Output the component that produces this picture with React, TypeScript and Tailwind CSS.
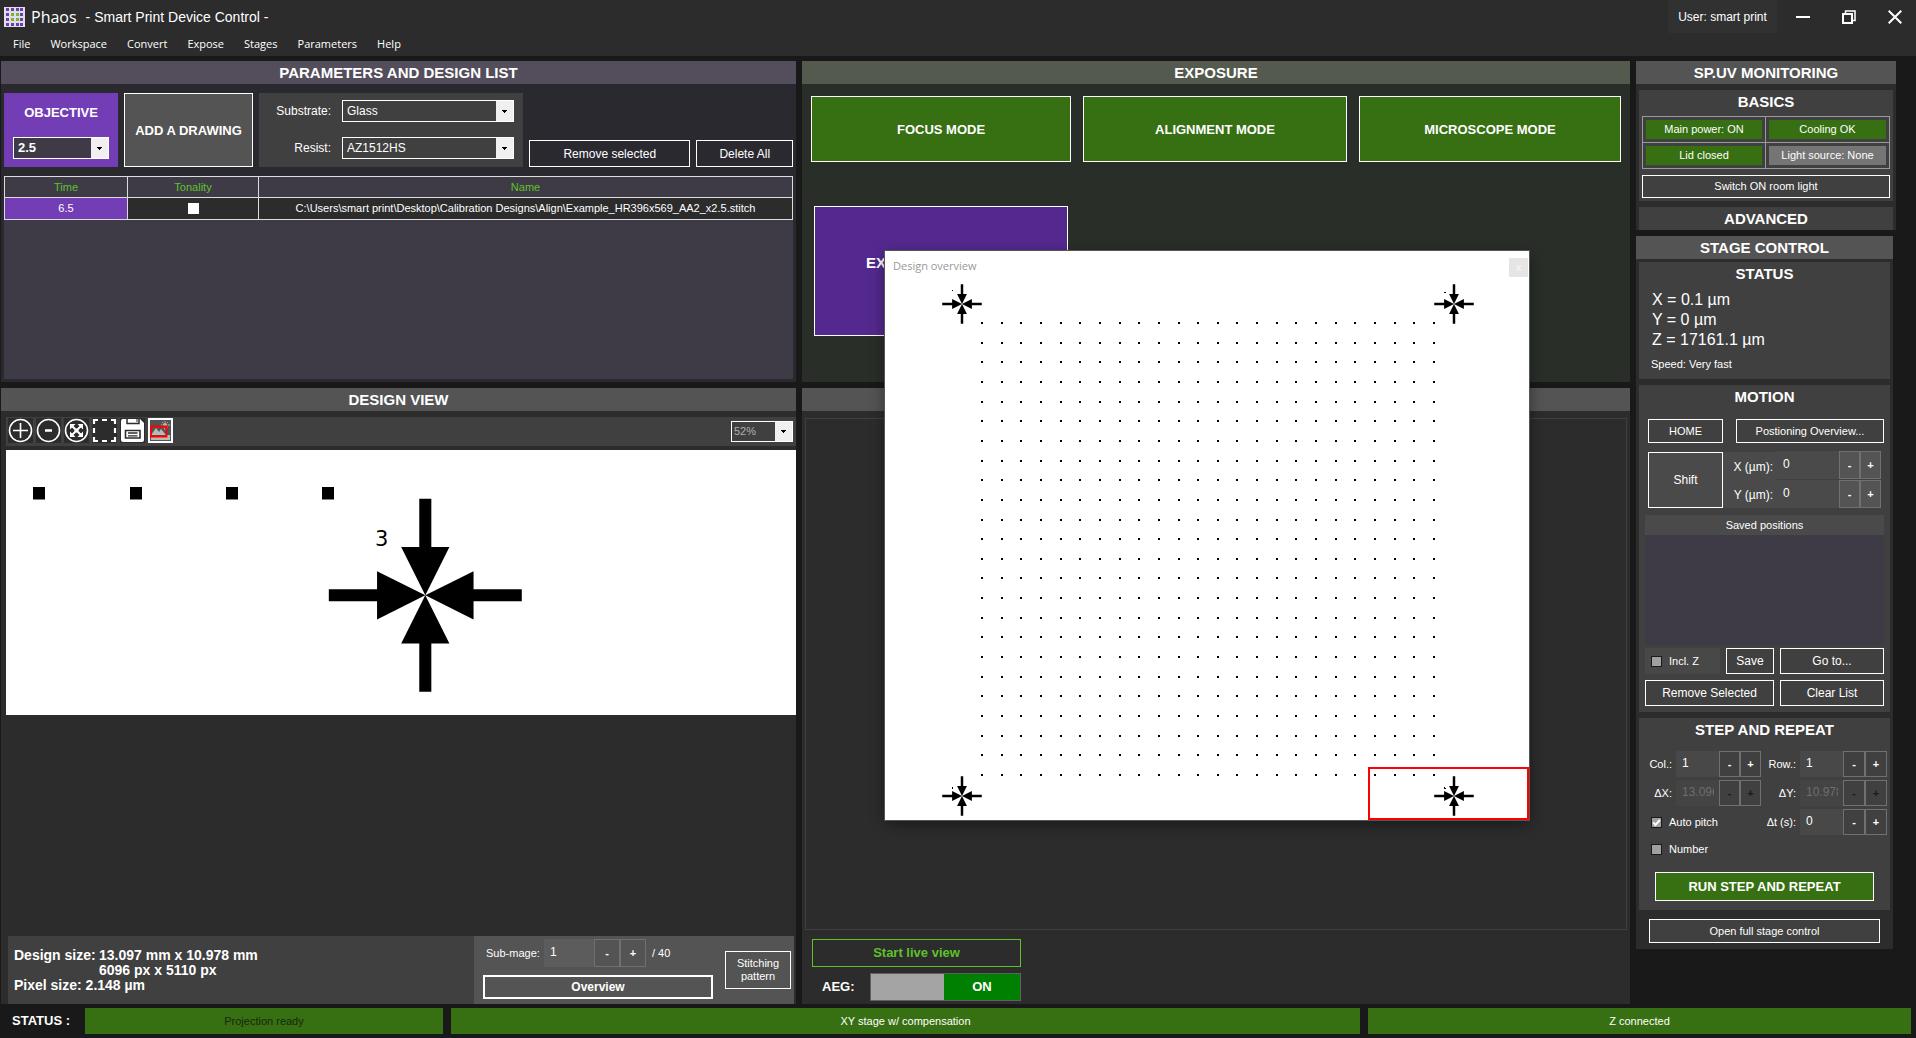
import React from 'react';

const outlineButton = 'border border-white text-white text-center';

function PanelTitle({ children, className = 'bg-[#545454]' }: { children?: React.ReactNode; className?: string }) {
  return (
    <h2 className={`flex h-[23px] shrink-0 items-center justify-center text-[15px] font-bold leading-5 ${className}`}>
      {children}
    </h2>
  );
}

function SubTitle({ children }: { children: React.ReactNode }) {
  return <h3 className="text-center text-[15px] font-bold leading-6">{children}</h3>;
}

function Combo({ id, label, value, className, selectClass }: {
  id: string; label: string; value: string; className: string; selectClass: string;
}) {
  return (
    <div className={`relative border border-white ${className}`}>
      <select
        id={id}
        aria-label={label}
        defaultValue={value}
        className={`block h-full w-full appearance-none pr-[18px] outline-none ${selectClass}`}
      >
        <option>{value}</option>
      </select>
      <span className="pointer-events-none absolute inset-y-0 right-0 flex w-[17px] items-center justify-center bg-[#f0f0f0]">
        <svg width="5" height="3" viewBox="0 0 5 3" shapeRendering="crispEdges">
          <path d="M0 0h5v1H4v1H3v1H2V2H1V1H0z" fill="#000" />
        </svg>
      </span>
    </div>
  );
}

function Stepper({ id, value, disabled, className, buttonClass, bg = 'bg-[#484848]' }: {
  id: string; value: string; disabled?: boolean; className: string; buttonClass: string; bg?: string;
}) {
  const tone = disabled ? 'text-[#1a1a1a]' : 'text-white';
  return (
    <div className={`flex ${className}`}>
      <input
        id={id}
        defaultValue={value}
        disabled={disabled}
        className={`min-w-0 flex-1 pb-[2px] pl-[6px] pr-[5px] text-xs outline-none ${bg} ${disabled ? 'text-[#6e6e6e]' : 'text-white'}`}
      />
      <button disabled={disabled} aria-label="Decrease" className={`border border-[#707070] text-[11px] font-bold leading-none ${tone} ${buttonClass}`}>-</button>
      <button disabled={disabled} aria-label="Increase" className={`border border-[#707070] text-[11px] font-bold leading-none ${tone} ${buttonClass}`}>+</button>
    </div>
  );
}

function Check({ id, label, checked }: { id: string; label: string; checked?: boolean }) {
  return (
    <div className="flex items-center gap-[7px]">
      <span className="relative flex">
        <input id={id} type="checkbox" defaultChecked={checked} className="h-[11px] w-[11px] appearance-none border border-[#1a1a1a] bg-[#a0a0a0]" />
        {checked && (
          <svg className="pointer-events-none absolute inset-0" width="11" height="11" viewBox="0 0 11 11">
            <path d="M2.2 5.4l2.3 2.6 4.3-5" fill="none" stroke="#fff" strokeWidth="2" />
          </svg>
        )}
      </span>
      <label htmlFor={id} className="text-[11px] leading-4">{label}</label>
    </div>
  );
}

function AlignmentMark({ x, y, scale }: { x: number; y: number; scale: number }) {
  return (
    <g transform={`translate(${x} ${y}) scale(${scale})`} fill="#000">
      {[0, 90, 180, 270].map((a) => (
        <path key={a} transform={`rotate(${a})`} d="M0 0L-24 -48H-6V-96H6V-48H24z" />
      ))}
    </g>
  );
}

function Logo() {
  const cells = [0, 1, 2, 3];
  return (
    <svg width="21" height="20" viewBox="0 0 21 20" shapeRendering="crispEdges" className="shrink-0">
      <rect width="21" height="20" rx="1" fill="#e3dcec" />
      {cells.map((r) => cells.map((c) => (
        <rect
          key={`${r}-${c}`}
          x={2 + c * 5 - (c > 2 ? 1 : 0)}
          y={1 + r * 5}
          width="3"
          height="3"
          fill={(r === 1 || r === 2) && (c === 1 || c === 2) ? '#76b82a' : '#6a3fa8'}
        />
      )))}
    </svg>
  );
}

function Header() {
  return (
    <header className="h-14 shrink-0 bg-[#2c2c2c]">
      <div className="flex h-[33px] items-stretch">
        <div className="flex flex-1 items-center pl-1">
          <Logo />
          <h1 className="ml-[6px] font-['Open_Sans',sans-serif] text-base leading-6">Phaos</h1>
          <span className="ml-[9px] text-sm leading-5">- Smart Print Device Control -</span>
        </div>
        <span className="flex w-[109px] items-center justify-center bg-[#313131] text-xs">User: smart print</span>
        <div className="flex w-[139px] items-center justify-end gap-8 pr-[14px]">
          <button aria-label="Minimize">
            <svg width="14" height="14" viewBox="0 0 14 14"><path d="M0 6h14v2H0z" fill="#fff" /></svg>
          </button>
          <button aria-label="Restore">
            <svg width="14" height="14" viewBox="0 0 14 14" fill="none" stroke="#fff">
              <path d="M1 4h9v9H1z" strokeWidth="2" />
              <path d="M3.5 3V1h9.500v9.500h-2" strokeWidth="1.500" />
            </svg>
          </button>
          <button aria-label="Close">
            <svg width="14" height="14" viewBox="0 0 14 14"><path d="M.7.7l12.600 12.600M13.300.7L.7 13.300" stroke="#fff" strokeWidth="2" /></svg>
          </button>
        </div>
      </div>
      <nav className="flex gap-5 pl-[13px] font-['Open_Sans',sans-serif] text-[11px] leading-[22px]">
        {['File', 'Workspace', 'Convert', 'Expose', 'Stages', 'Parameters', 'Help'].map((m) => (
          <button key={m}>{m}</button>
        ))}
      </nav>
    </header>
  );
}

function DesignList() {
  return (
    <section className="bg-[#2b2930]">
      <PanelTitle className="bg-[#544e5c]">PARAMETERS AND DESIGN LIST</PanelTitle>
      <div className="flex px-[3px] pt-[9px]">
        <div className="flex h-[74px] w-[114px] flex-col items-center justify-between bg-[#733eb5] pb-2 pt-3">
          <label htmlFor="objective" className="text-[13px] font-bold leading-4">OBJECTIVE</label>
          <Combo id="objective" label="Objective" value="2.5" className="h-[22px] w-24" selectClass="bg-[#3f3b46] pl-1 text-[13px] font-bold" />
        </div>
        <button className="ml-[6px] h-[74px] w-[129px] border border-white bg-[#545454] pt-px text-[13px] font-bold">ADD A DRAWING</button>
        <div className="ml-[6px] grid h-[74px] w-[264px] grid-cols-[72px_172px] content-between items-center gap-x-[11px] bg-[#404040] pb-2 pt-[7px]">
          <label htmlFor="substrate" className="text-right text-xs">Substrate:</label>
          <Combo id="substrate" label="Substrate" value="Glass" className="h-[22px]" selectClass="bg-[#404040] pl-1 text-xs" />
          <label htmlFor="resist" className="text-right text-xs">Resist:</label>
          <Combo id="resist" label="Resist" value="AZ1512HS" className="h-[22px]" selectClass="bg-[#404040] pl-1 text-xs" />
        </div>
        <div className="ml-[6px] flex flex-1 items-end gap-[6px]">
          <button className={`h-[27px] flex-[162] pt-px text-xs ${outlineButton}`}>Remove selected</button>
          <button className={`h-[27px] flex-[96] pt-px text-xs ${outlineButton}`}>Delete All</button>
        </div>
      </div>
      <div className="mx-[3px] mb-[3px] mt-[9px] h-[203px] bg-[#3f3b46]">
        <table className="w-full table-fixed border-collapse text-center text-[11px] leading-[21px]">
          <colgroup>
            <col className="w-[123px]" />
            <col className="w-[131px]" />
            <col />
          </colgroup>
          <thead>
            <tr className="h-[21px] text-[#5ec22a]">
              {['Time', 'Tonality', 'Name'].map((h) => (
                <th key={h} className="border border-[#dcdcdc] p-0 font-normal leading-5">{h}</th>
              ))}
            </tr>
          </thead>
          <tbody>
            <tr className="h-[22px]">
              <td className="border border-[#dcdcdc] bg-[#733eb5] p-0">6.5</td>
              <td className="border border-[#dcdcdc] bg-[#2c2c2c] p-0">
                <input type="checkbox" aria-label="Tonality" className="mx-auto block h-[11px] w-[11px] appearance-none bg-white" />
              </td>
              <td className="border border-[#dcdcdc] bg-[#2c2c2c] p-0">
                {'C:\\Users\\smart print\\Desktop\\Calibration Designs\\Align\\Example_HR396x569_AA2_x2.5.stitch'}
              </td>
            </tr>
          </tbody>
        </table>
      </div>
    </section>
  );
}

function ToolIcon({ label, active, children }: { label: string; active?: boolean; children: React.ReactNode }) {
  return (
    <button aria-label={label} className={`h-[25px] w-[25px] ${active ? 'bg-[#545454]' : 'bg-[#2c2c2c]'}`}>
      <svg width="25" height="25" viewBox="0 0 25 25" fill="none" stroke="#fff">{children}</svg>
    </button>
  );
}

function Toolbar() {
  return (
    <div className="ml-[5px] mt-[6px] flex h-[29px] items-center justify-between bg-[#404040] pl-[2px] pr-[3px]">
      <div className="flex gap-[3px] pb-[2px]">
        <ToolIcon label="Zoom in">
          <circle cx="12.5" cy="12.5" r="11" strokeWidth="1.600" />
          <path d="M12.500 5v15M5 12.500h15" strokeWidth="1.600" />
        </ToolIcon>
        <ToolIcon label="Zoom out">
          <circle cx="12.5" cy="12.5" r="11" strokeWidth="1.600" />
          <path d="M9 12.500h7" strokeWidth="2.500" />
        </ToolIcon>
        <ToolIcon label="Fit to view">
          <circle cx="12.5" cy="12.5" r="11" strokeWidth="1.600" />
          <path d="M7.500 7.500l10 10M17.500 7.500l-10 10" strokeWidth="2" />
          <path d="M6 6h5.500L6 11.500zM19 6h-5.500L19 11.500zM6 19h5.500L6 13.500zM19 19h-5.500L19 13.500z" fill="#fff" stroke="none" />
          <path d="M10.500 12.500h4M12.500 10.500v4" strokeWidth="1" />
        </ToolIcon>
        <ToolIcon label="Select area">
          <path
            d="M2 6V2h4M10 2h5M19 2h4v4M23 10v5M23 19v4h-4M15 23h-5M6 23H2v-4M2 15v-5"
            strokeWidth="2.200"
          />
        </ToolIcon>
        <ToolIcon label="Save">
          <path d="M3 1h17l4 4v17a2 2 0 0 1-2 2H3a2 2 0 0 1-2-2V3a2 2 0 0 1 2-2z" fill="#fff" stroke="none" />
          <path d="M7 1v4.500h12V1" stroke="#2c2c2c" strokeWidth="1.500" />
          <path d="M17 1v3" stroke="#2c2c2c" strokeWidth="1" />
          <path d="M5.500 12.500h14.500v7.500H5.500z" fill="#fff" stroke="#2c2c2c" strokeWidth="1.600" />
          <path d="M8 15h9.500M8 17.800h9.500" stroke="#2c2c2c" strokeWidth="1.300" />
        </ToolIcon>
        <ToolIcon label="Show overview" active>
          <path d="M1 1h23v23H1z" strokeWidth="2" />
          <path d="M3 17l5-7 3 4 2-3 5 6z" fill="#b8b8b8" stroke="none" />
          <path d="M3 19h19v3H3z" fill="#b8b8b8" stroke="none" />
          <path d="M19 17h3v3h-3z" fill="#b8b8b8" stroke="none" />
          <circle cx="17" cy="7" r="2" fill="#b8b8b8" stroke="none" />
          <path d="M17 3v1.500M13 7h1.500M19.500 7H22M14.200 4.200l1 1M19.800 4.200l-1 1M19.800 9.800l-1-1M16 10l1.500 2" stroke="#b8b8b8" />
          <path d="M3 8.500h15.500v10H3z" stroke="#f00" strokeWidth="1.800" />
        </ToolIcon>
      </div>
      <Combo id="zoom" label="Zoom" value="52%" className="h-[21px] w-[62px]" selectClass="bg-[#404040] pl-[2px] text-[11px] text-[#b0b0b0]" />
    </div>
  );
}

function DesignView() {
  return (
    <section className="flex flex-1 flex-col bg-[#2c2c2c]">
      <PanelTitle>DESIGN VIEW</PanelTitle>
      <Toolbar />
      <div className="ml-[5px] mt-1 overflow-hidden bg-white">
        <svg width="790" height="265" viewBox="0 0 790 265" className="block">
          {[27, 124, 220, 316].map((x) => (
            <rect key={x} x={x} y="37" width="12" height="12.5" fill="#000" />
          ))}
          <text x="369" y="96" fontFamily="DejaVu Sans, sans-serif" fontSize="21" fill="#000">3</text>
          <AlignmentMark x={419.3} y={145.3} scale={1.005} />
        </svg>
      </div>
      <div className="ml-[7px] mr-[2px] mt-auto flex h-[68px]">
        <div className="flex-1 bg-[#404040] pl-[6px] pt-3 text-sm font-bold leading-[15px]">
          <div className="grid grid-cols-[85px_1fr]">
            <span>Design size:</span>
            <span>13.097 mm x 10.978 mm</span>
            <span className="col-start-2">6096 px x 5110 px</span>
          </div>
          <div>Pixel size: 2.148 µm</div>
        </div>
        <div className="flex w-[320px] items-center justify-between bg-[#545454] pl-[9px] pr-[3px]">
          <div className="flex h-full w-[230px] flex-col justify-between pb-[5px] pt-[3px]">
            <div className="flex items-center text-[11px]">
              <label htmlFor="subimage" className="w-[61px] pl-[3px]">Sub-mage:</label>
              <Stepper id="subimage" value="1" className="h-7 w-[102px]" buttonClass="w-[26px] bg-[#545454]" bg="bg-[#5c5c5c]" />
              <span className="ml-[6px]">/ 40</span>
            </div>
            <button className="h-6 border-2 border-white text-xs font-bold leading-none">Overview</button>
          </div>
          <button className={`h-[38px] w-[66px] text-[11px] leading-[13px] ${outlineButton}`}>Stitching<br />pattern</button>
        </div>
      </div>
    </section>
  );
}

function Exposure() {
  return (
    <section className="h-[321px] bg-[#2a2e29]">
      <PanelTitle className="bg-[#545a4e]">EXPOSURE</PanelTitle>
      <div className="grid grid-cols-[260fr_264fr_262fr] gap-3 px-[9px] pt-3">
        {['FOCUS MODE', 'ALIGNMENT MODE', 'MICROSCOPE MODE'].map((m) => (
          <button key={m} className="h-[66px] border border-white bg-[#367012] pt-px text-[13px] font-bold">{m}</button>
        ))}
      </div>
      <button className="ml-3 mt-11 h-[130px] w-[254px] border border-white bg-[#54298f] pb-4 pl-[51px] text-left text-[15px] font-bold">
        EX
      </button>
    </section>
  );
}

function LiveView() {
  return (
    <section className="flex flex-1 flex-col bg-[#2c2c2c]">
      <PanelTitle />
      <div className="mx-[3px] mt-[7px] flex-1 border border-[#404040]" />
      <div className="pb-[3px] pl-[10px] pt-[9px]">
        <button className="h-7 w-[209px] border border-[#5ec22a] text-[13px] font-bold text-[#5ec22a]">Start live view</button>
        <div className="mt-[6px] flex items-center">
          <label htmlFor="aeg" className="w-[58px] pl-[10px] text-[13px] font-bold">AEG:</label>
          <button id="aeg" role="switch" aria-checked="true" className="flex h-7 w-[151px] border border-[#606060] bg-[#a4a4a4]">
            <span className="ml-auto flex h-full w-[76px] items-center justify-center bg-[#008000] text-[13px] font-bold">ON</span>
          </button>
        </div>
      </div>
    </section>
  );
}

function OverviewWindow() {
  const steps = Array.from({ length: 24 }, (_, i) => Math.round(i * 19.65));
  return (
    <div
      role="dialog"
      aria-label="Design overview"
      className="absolute left-[83px] top-[190px] h-[569px] w-[644px] bg-white shadow-[0_0_0_1px_#555,0_4px_14px_rgba(0,0,0,0.45)]"
    >
      <div className="absolute inset-x-0 top-0 flex justify-between pl-2 pr-[1px] pt-[7px]">
        <span className="font-['Open_Sans',sans-serif] text-[11px] leading-4 text-[#999999]">Design overview</span>
        <button aria-label="Close overview" className="h-[19px] w-[19px] bg-[#e5e5e5] text-[11px] leading-none text-[#f6f6f6]">x</button>
      </div>
      <svg width="644" height="569" viewBox="0 0 644 569" className="block">
        <g shapeRendering="crispEdges">
          {steps.map((y) => steps.map((x) => (
            <rect key={`${x}-${y}`} x={96 + x} y={71 + y} width="2" height="2" fill="#000" />
          )))}
          <path d="M67 39h1v1h-1zM559 41h2v1h-2zM67 536h1v2h-1zM559 536h1v1h1v1h-2v-1z" fill="#000" />
        </g>
        <AlignmentMark x={77} y={53} scale={0.206} />
        <AlignmentMark x={569} y={53} scale={0.206} />
        <AlignmentMark x={77} y={545} scale={0.206} />
        <AlignmentMark x={569} y={545} scale={0.206} />
        <rect x="484" y="517" width="159" height="51" fill="none" stroke="#f00" strokeWidth="2" />
      </svg>
    </div>
  );
}

function Monitoring() {
  const cells = ['Main power: ON', 'Cooling OK', 'Lid closed', 'Light source: None'];
  return (
    <section className="bg-[#2c2c2c]">
      <PanelTitle>SP.UV MONITORING</PanelTitle>
      <div className="mx-[3px] mt-[6px] bg-[#404040] px-[3px] pb-[3px]">
        <SubTitle>BASICS</SubTitle>
        <div className="mt-[2px] grid grid-cols-[122fr_123fr] gap-px border border-[#9a9a9a] bg-[#9a9a9a] text-[11px]">
          {cells.map((c, i) => (
            <div key={c} className="bg-[#404040] p-[3px]">
              <div className={`text-center leading-[19px] ${i === 3 ? 'bg-[#757575]' : 'bg-[#367012]'}`}>{c}</div>
            </div>
          ))}
        </div>
        <button className={`mt-[6px] h-[23px] w-full text-[11px] ${outlineButton}`}>Switch ON room light</button>
      </div>
      <div className="mx-[3px] mt-[6px] h-[23px] bg-[#404040]">
        <SubTitle>ADVANCED</SubTitle>
      </div>
    </section>
  );
}

function Motion() {
  return (
    <div className="mt-[6px] bg-[#404040] px-[6px] pb-[6px]">
      <SubTitle>MOTION</SubTitle>
      <div className="mt-[10px] flex justify-between pl-[3px]">
        <button className={`h-6 w-[75px] text-[11px] ${outlineButton}`}>HOME</button>
        <button className={`h-6 w-[148px] text-[11px] ${outlineButton}`}>Postioning Overview...</button>
      </div>
      <div className="mt-2 flex items-end pl-[3px] pr-[3px]">
        <button className={`h-14 w-[75px] bg-[#4a4a4a] text-xs ${outlineButton}`}>Shift</button>
        <div className="grid h-14 flex-1 grid-rows-2 bg-[#4a4a4a] pr-1 text-right text-xs leading-[30px]">
          <label htmlFor="shift-x">X (µm):</label>
          <label htmlFor="shift-y">Y (µm):</label>
        </div>
        <div className="flex w-[104px] flex-col gap-px">
          <Stepper id="shift-x" value="0" className="h-7" buttonClass="w-[21px] bg-[#545454]" bg="bg-[#4a4a4a]" />
          <Stepper id="shift-y" value="0" className="h-7" buttonClass="w-[21px] bg-[#545454]" bg="bg-[#4a4a4a]" />
        </div>
      </div>
      <div className="mt-[7px] bg-[#4a4a4a] pt-px text-center text-[11px] leading-[19px]">Saved positions</div>
      <div className="h-[110px] bg-[#3f3b46]" />
      <div className="mt-[3px] flex gap-[6px]">
        <div className="flex w-[75px] items-center bg-[#484848] pl-[6px]">
          <Check id="incl-z" label="Incl. Z" />
        </div>
        <button className={`h-[26px] w-12 text-xs ${outlineButton}`}>Save</button>
        <button className={`h-[26px] flex-1 text-xs ${outlineButton}`}>Go to...</button>
      </div>
      <div className="mt-[6px] flex gap-[6px]">
        <button className={`h-[26px] w-[129px] text-xs ${outlineButton}`}>Remove Selected</button>
        <button className={`h-[26px] flex-1 text-xs ${outlineButton}`}>Clear List</button>
      </div>
    </div>
  );
}

function StepAndRepeat() {
  return (
    <div className="mt-[6px] bg-[#404040] pb-[9px]">
      <SubTitle>STEP AND REPEAT</SubTitle>
      <div className="mt-[9px] grid grid-cols-[33px_85px_31px_87px] items-center gap-x-1 gap-y-[3px] text-right text-[11px]">
        <label htmlFor="col">Col.:</label>
        <Stepper id="col" value="1" className="h-[26px]" buttonClass="w-[21px] bg-[#404040]" />
        <label htmlFor="row">Row.:</label>
        <Stepper id="row" value="1" className="h-[26px]" buttonClass="w-[22px] bg-[#404040]" />
        <label htmlFor="dx">ΔX:</label>
        <Stepper id="dx" value="13.096" disabled className="h-[26px]" buttonClass="w-[21px] bg-[#404040]" bg="bg-[#444444]" />
        <label htmlFor="dy">ΔY:</label>
        <Stepper id="dy" value="10.978" disabled className="h-[26px]" buttonClass="w-[22px] bg-[#404040]" bg="bg-[#444444]" />
        <div className="col-span-2 pl-3">
          <Check id="auto-pitch" label="Auto pitch" checked />
        </div>
        <label htmlFor="dt">Δt (s):</label>
        <Stepper id="dt" value="0" className="h-[26px]" buttonClass="w-[22px] bg-[#404040]" />
      </div>
      <div className="mt-[6px] pl-3">
        <Check id="number" label="Number" />
      </div>
      <button className="mx-4 mt-[15px] h-[29px] w-[219px] border border-white bg-[#367012] text-[13px] font-bold">RUN STEP AND REPEAT</button>
    </div>
  );
}

function StageControl() {
  return (
    <section className="mr-[3px] bg-[#2c2c2c] pb-[6px]">
      <PanelTitle>STAGE CONTROL</PanelTitle>
      <div className="px-[3px] pt-[3px]">
        <div className="bg-[#404040] pb-[7px]">
          <SubTitle>STATUS</SubTitle>
          <div className="mt-1 pl-[13px] text-base leading-5">
            <div>X = 0.1 µm</div>
            <div>Y = 0 µm</div>
            <div>Z = 17161.1 µm</div>
          </div>
          <div className="mt-[6px] pl-3 text-[11px] leading-4">Speed: Very fast</div>
        </div>
        <Motion />
        <StepAndRepeat />
        <button className={`ml-[10px] mt-[9px] block h-6 w-[231px] bg-[#404040] text-[11px] ${outlineButton}`}>Open full stage control</button>
      </div>
    </section>
  );
}

function StatusBar() {
  return (
    <footer className="flex h-[34px] shrink-0 gap-2 pb-1 pl-3 pr-[5px] pt-1 text-[11px] leading-[26px]">
      <strong className="w-[65px] text-[13px]">STATUS :</strong>
      <div className="flex-[358] bg-[#367012] text-center text-[#16280c]">Projection ready</div>
      <div className="flex-[909] bg-[#367012] text-center">XY stage w/ compensation</div>
      <div className="flex-[543] bg-[#367012] text-center">Z connected</div>
    </footer>
  );
}

export default function App() {
  return (
    <div className="flex min-h-screen flex-col bg-[#191919] font-['Liberation_Sans',Arial,sans-serif] text-white">
      <Header />
      <main className="flex flex-1 gap-[6px] pl-px pr-5 pt-[5px]">
        <div className="flex min-w-0 flex-[795] flex-col gap-[6px]">
          <DesignList />
          <DesignView />
        </div>
        <div className="relative flex min-w-0 flex-[828] flex-col gap-[6px]">
          <Exposure />
          <LiveView />
          <OverviewWindow />
        </div>
        <div className="flex w-[260px] shrink-0 flex-col gap-[6px]">
          <Monitoring />
          <StageControl />
        </div>
      </main>
      <StatusBar />
    </div>
  );
}
